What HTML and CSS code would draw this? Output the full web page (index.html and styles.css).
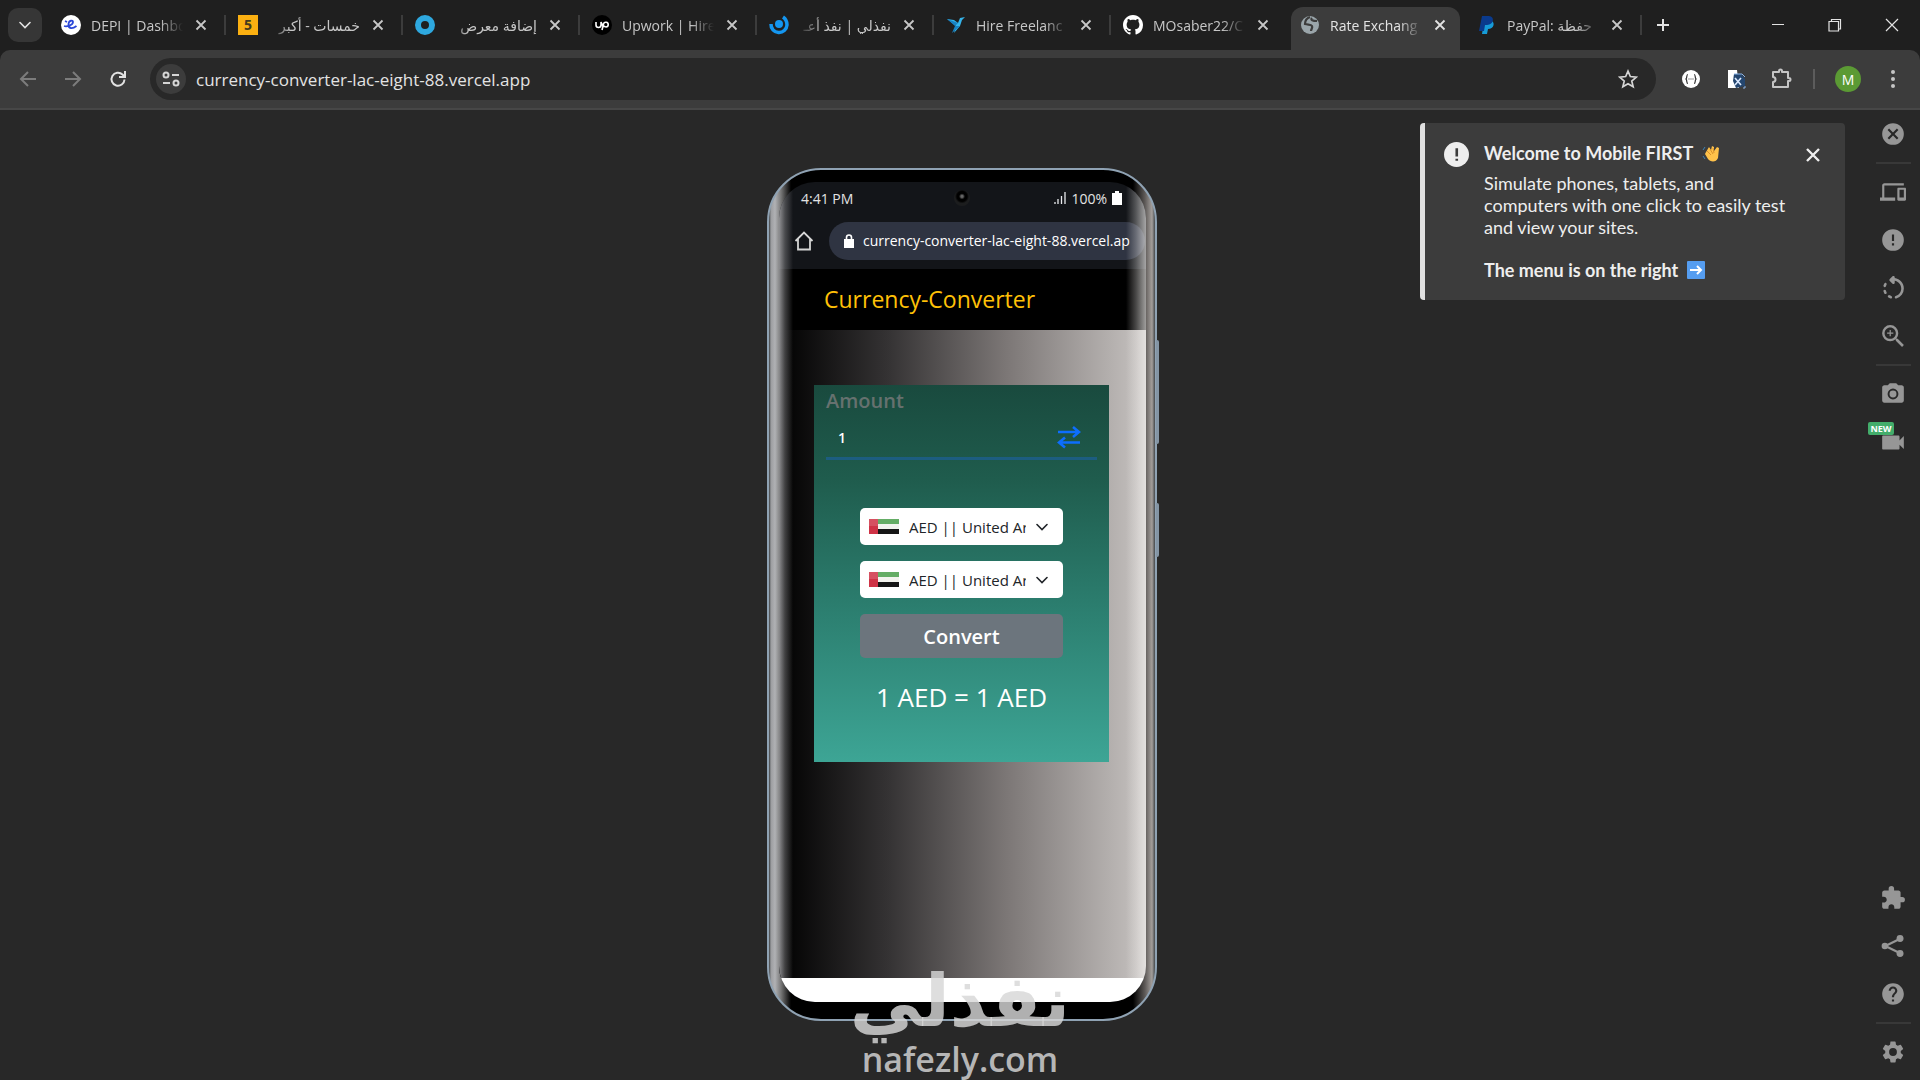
FILE: index.html
```html
<!DOCTYPE html>
<html lang="en">
<head>
<meta charset="utf-8">
<title>Rate Exchange</title>
<link rel="stylesheet" href="styles.css">
</head>
<body>
<svg class="defs" aria-hidden="true">
  <symbol id="x" viewBox="0 0 12 12"><path d="M1.500 1.500l9 9M10.500 1.500l-9 9" stroke="currentColor" stroke-width="1.800" fill="none"/></symbol>
  <symbol id="flag" viewBox="0 0 30 15"><path fill="#fff" d="M0 0h30v15H0z"/><path fill="#4a9f4c" d="M9 0h21v5H9z"/><path fill="#f3f3ee" d="M9 5h21v5H9z"/><path fill="#161616" d="M9 10h21v5H9z"/><path fill="#cf3346" d="M0 0h9v15H0z"/><path fill="#fff" opacity=".15" d="M0 0h30v7H0z"/></symbol>
  <symbol id="chev" viewBox="0 0 12 8"><path d="M1 1.500l5 5 5-5" stroke="currentColor" stroke-width="1.600" fill="none" stroke-linecap="round"/></symbol>
</svg>
<header class="browser">
  <nav class="tabs">
    <button class="tab-search" aria-label="Search tabs"><svg width="12" height="8"><use href="#chev"/></svg></button>
    <div class="tab"><svg class="fav" viewBox="0 0 20 20"><circle cx="10" cy="10" r="10" fill="#fff"/><path d="M3 11c3 1 9-1 9-4 0-2-4-2-4.500 2-.5 5 4 5 8 2M4 6l2 1" fill="none" stroke="#2c48d8" stroke-width="1.800"/></svg><span class="name">DEPI | Dashbo</span><button class="close" aria-label="Close tab"><svg><use href="#x"/></svg></button></div>
    <div class="tab"><svg class="fav" viewBox="0 0 20 20"><path fill="#fbb011" d="M0 0h20v20H0z"/><text x="10" y="15" class="five">5</text></svg><span class="name rtl" dir="rtl">خمسات - أكبر</span><button class="close" aria-label="Close tab"><svg><use href="#x"/></svg></button></div>
    <div class="tab"><svg class="fav" viewBox="0 0 20 20"><circle cx="10" cy="10" r="7" fill="none" stroke="#2ea8df" stroke-width="6"/></svg><span class="name rtl" dir="rtl">إضافة معرض</span><button class="close" aria-label="Close tab"><svg><use href="#x"/></svg></button></div>
    <div class="tab"><svg class="fav" viewBox="0 0 20 20"><circle cx="10" cy="10" r="10" fill="#000"/><path d="M4 7v3a2.500 2.500 0 0 0 5 0V7c1 4 2 4 3 5M10 15l1.500-6a2.400 2.400 0 1 1 2.500 3c-1.500 0-3-1.500-4-3" fill="none" stroke="#fff" stroke-width="1.600"/></svg><span class="name">Upwork | Hire</span><button class="close" aria-label="Close tab"><svg><use href="#x"/></svg></button></div>
    <div class="tab"><svg class="fav" viewBox="0 0 20 20"><circle cx="10" cy="9" r="4" fill="#1496f0"/><path d="M2 9a8 8 0 0 0 16 1c0-4-1-6-4-8" fill="none" stroke="#1496f0" stroke-width="3.500"/></svg><span class="name rtl" dir="rtl">نفذلي | نفذ أعـ</span><button class="close" aria-label="Close tab"><svg><use href="#x"/></svg></button></div>
    <div class="tab"><svg class="fav" viewBox="0 0 20 20"><path d="M1 4l7 1 4 3 2-5 5-1-3 3-2 6-6 7 2-7z" fill="#35b4ea"/><path d="M1 4l8 7 3-3zM6 18l3-7 5 0z" fill="#1782c4"/></svg><span class="name">Hire Freelanc</span><button class="close" aria-label="Close tab"><svg><use href="#x"/></svg></button></div>
    <div class="tab before"><svg class="fav" viewBox="0 0 16 16"><path fill="#fff" d="M8 0C3.580 0 0 3.580 0 8c0 3.540 2.290 6.530 5.470 7.590.4.070.55-.17.55-.38 0-.19-.01-.82-.01-1.490-2.010.37-2.530-.49-2.690-.94-.09-.23-.48-.94-.82-1.130-.28-.15-.68-.52-.01-.53.63-.01 1.080.58 1.230.82.72 1.210 1.870.87 2.330.66.07-.52.28-.87.51-1.070-1.780-.2-3.640-.89-3.640-3.950 0-.87.31-1.590.82-2.150-.08-.2-.36-1.020.08-2.120 0 0 .67-.21 2.200.82.64-.18 1.320-.27 2-.27s1.360.09 2 .27c1.530-1.040 2.200-.82 2.200-.82.44 1.100.16 1.920.08 2.120.51.56.82 1.270.82 2.150 0 3.070-1.870 3.750-3.650 3.950.29.25.54.73.54 1.480 0 1.070-.01 1.930-.01 2.200 0 .21.15.46.55.38A8.010 8.010 0 0 0 16 8c0-4.420-3.580-8-8-8z"/></svg><span class="name">MOsaber22/C</span><button class="close" aria-label="Close tab"><svg><use href="#x"/></svg></button></div>
    <div class="tab active"><svg class="fav" viewBox="0 0 20 20"><circle cx="10" cy="10" r="9" fill="#9aa5aa"/><path d="M10 2C7 3 5 6 5 9c3 1 6 0 7 2s-1 3-1 5M12 3c-2 2 1 3 5 3" fill="none" stroke="#3c3c3c" stroke-width="2.200"/></svg><span class="name">Rate Exchang</span><button class="close" aria-label="Close tab"><svg><use href="#x"/></svg></button></div>
    <div class="tab"><svg class="fav" viewBox="0 0 20 20"><path fill="#169bd7" d="M7 6h8c3 2 2 8-4 8l-1 5H5z"/><path fill="#0a3a8c" d="M5 1h7c6 0 5 9-2 9H8l-1 6H2z"/></svg><span class="name">PayPal: حفظة</span><button class="close" aria-label="Close tab"><svg><use href="#x"/></svg></button></div>
    <button class="plus" aria-label="New tab"><svg width="14" height="14" viewBox="0 0 14 14"><path d="M7 1v12M1 7h12" stroke="currentColor" stroke-width="2"/></svg></button>
    <div class="window-controls">
      <button aria-label="Minimize"><svg width="14" height="14" viewBox="0 0 14 14"><path d="M1 6.500h12" stroke="currentColor"/></svg></button>
      <button aria-label="Restore"><svg width="14" height="14" viewBox="0 0 14 14"><path d="M1 3.500h9.500V13H1zM3.500 3.500v-2h9V11h-2" fill="none" stroke="currentColor" stroke-width="1.200"/></svg></button>
      <button aria-label="Close window"><svg width="14" height="14" viewBox="0 0 14 14"><path d="M1 1l12 12M13 1L1 13" stroke="currentColor" stroke-width="1.200"/></svg></button>
    </div>
  </nav>
  <div class="toolbar">
    <button class="nav dim" aria-label="Back"><svg viewBox="0 0 18 18"><path d="M17 9H2M9 2L2 9l7 7" /></svg></button>
    <button class="nav dim" aria-label="Forward"><svg viewBox="0 0 18 18"><path d="M1 9h15M9 2l7 7-7 7"/></svg></button>
    <button class="nav" aria-label="Reload"><svg viewBox="0 0 18 18"><path d="M15.500 9.500A6.500 6.500 0 1 1 13.500 4.500L16 7M16 1v6h-6"/></svg></button>
    <div class="omnibox">
      <button class="site" aria-label="Site information"><svg width="18" height="18" viewBox="0 0 18 18"><path d="M10 5h7M1 13h7" /><circle cx="4" cy="5" r="2.500"/><circle cx="14" cy="13" r="2.500"/></svg></button>
      <input type="text" aria-label="Address" value="currency-converter-lac-eight-88.vercel.app">
      <button class="star" aria-label="Bookmark"><svg width="20" height="20" viewBox="0 0 24 24"><path d="M12 2.500l2.800 6.600 7.200.6-5.500 4.700 1.700 7-6.200-3.800-6.200 3.800 1.700-7L2 9.700l7.200-.6z"/></svg></button>
    </div>
    <div class="extensions">
      <button aria-label="Extension"><svg width="20" height="20" viewBox="0 0 20 20"><circle cx="10" cy="10" r="9" fill="#fff"/><path d="M7 5.500c-2 0-.5 3-2 4.500 1.500 1.500 0 4.500 2 4.500M13 5.500c2 0 .5 3 2 4.500-1.500 1.500 0 4.500-2 4.500M7.500 10h1M9.500 10h1M11.500 10h1" fill="none" stroke="#333" stroke-width="1.200"/></svg></button>
      <button aria-label="Translate extension"><svg width="20" height="20" viewBox="0 0 20 20"><path fill="#fff" d="M2 1h9l2 18H2z"/><path fill="#24466f" d="M8 5h7l4 5v7l-9 2-3-7z"/><path d="M9 9l6 7M15 9l-6 7" stroke="#dceaff" stroke-width="1.600"/><path d="M8 5h8l3 3M17 19h2v-2" stroke="#8ab4e8" fill="none"/></svg></button>
      <button aria-label="Extensions"><svg width="22" height="22" viewBox="0 0 22 22"><path d="M3 4h6V3a1.500 1.500 0 0 1 3 0v1h6v6h1a1.500 1.500 0 0 1 0 3h-1v6H3v-5a2.500 2.500 0 0 0 0-5z" fill="none" stroke="#c5c5c5" stroke-width="2" stroke-linejoin="round"/></svg></button>
      <i class="rule"></i>
      <button class="avatar" aria-label="Profile">M</button>
      <button aria-label="Menu"><svg width="20" height="20" viewBox="0 0 20 20" fill="#c5c5c5"><circle cx="10" cy="3" r="2"/><circle cx="10" cy="10" r="2"/><circle cx="10" cy="17" r="2"/></svg></button>
    </div>
  </div>
</header>

<main class="stage">
  <div class="device">
    <i class="key power"></i><i class="key volume"></i>
    <div class="screen">
      <div class="status"><span>4:41 PM</span><i class="camera"></i><span class="signal"><svg width="12" height="12" viewBox="0 0 12 12"><path d="M1 12v-2M4 12V7M7.500 12V4M11 12V0" stroke="#e8eaed" stroke-width="1.300"/></svg>100%<svg width="10" height="14" viewBox="0 0 10 14"><path fill="#fff" d="M3 0h4v2h3v12H0V2h3z"/></svg></span></div>
      <div class="address"><svg width="20" height="20" viewBox="0 0 20 20"><path d="M1.500 10L10 1.500l8.500 8.500M4 8v10.500h12V8" fill="none" stroke="#d5d5d5" stroke-width="1.800"/></svg>
        <div class="pill"><svg width="10" height="14" viewBox="0 0 10 14"><path fill="#fff" d="M0 5h10v9H0z"/><path d="M2.500 6V3.500a2.500 2.500 0 0 1 5 0V6" fill="none" stroke="#fff" stroke-width="1.600"/></svg><span>currency-converter-lac-eight-88.vercel.ap</span></div></div>
      <div class="brand">Currency-Converter</div>
      <div class="page">
        <form class="card">
          <label class="label" for="amount">Amount</label>
          <div class="amount"><input id="amount" type="text" value="1"><button type="button" aria-label="Swap currencies"><svg width="24" height="24" viewBox="0 0 24 24"><path d="M1 7h21M16 2l6 5-6 5M23 17.500H2M8 12.500l-6 5 6 5" fill="none" stroke="#0d6efd" stroke-width="2.600"/></svg></button></div>
          <div class="choices">
            <div class="choice"><svg width="30" height="15"><use href="#flag"/></svg><select aria-label="From currency"><option>AED || United Arab Emirates Dirham</option></select><svg width="12" height="8"><use href="#chev"/></svg></div>
            <div class="choice"><svg width="30" height="15"><use href="#flag"/></svg><select aria-label="To currency"><option>AED || United Arab Emirates Dirham</option></select><svg width="12" height="8"><use href="#chev"/></svg></div>
            <button type="button" class="convert">Convert</button>
          </div>
          <output class="result">1 AED = 1 AED</output>
        </form>
      </div>
      <div class="homebar"></div>
    </div>
  </div>

  <aside class="tools">
    <button aria-label="Exit"><svg viewBox="0 0 24 24"><path d="M12 2a10 10 0 1 0 0 20 10 10 0 0 0 0-20zm5 13.600L15.600 17 12 13.400 8.400 17 7 15.600l3.600-3.600L7 8.400 8.400 7l3.600 3.600L15.600 7 17 8.400 13.400 12z"/></svg></button>
    <hr>
    <button aria-label="Devices"><svg viewBox="0 0 24 24"><path d="M4 6h18V4H4c-1.100 0-2 .9-2 2v11H0v3h14v-3H4V6zm19 2h-6c-.55 0-1 .45-1 1v10c0 .55.450 1 1 1h6c.55 0 1-.45 1-1V9c0-.55-.45-1-1-1zm-1 9h-4v-7h4v7z"/></svg></button>
    <button aria-label="Information"><svg viewBox="0 0 24 24"><path d="M12 2a10 10 0 1 0 0 20 10 10 0 0 0 0-20zm1 15h-2v-2h2v2zm0-4h-2V7h2v6z"/></svg></button>
    <button aria-label="Rotate"><svg viewBox="0 0 24 24"><path d="M6.560 7.980C6.100 7.520 5.310 7.600 5 8.170c-.28.51-.5 1.030-.67 1.580-.19.630.31 1.250.96 1.250h.01c.43 0 .82-.28.94-.7.12-.4.28-.79.48-1.170.22-.37.15-.84-.16-1.150zM5.310 13h-.02c-.65 0-1.150.62-.96 1.250.16.540.38 1.070.66 1.580.31.570 1.110.66 1.570.2.300-.31.380-.77.170-1.150-.2-.37-.36-.76-.48-1.160a.97.97 0 0 0-.94-.72zm2.850 6.020c.51.28 1.040.5 1.590.66.620.180 1.240-.32 1.240-.96v-.03c0-.43-.28-.82-.7-.94-.4-.12-.78-.28-1.150-.48a.97.97 0 0 0-1.160.17l-.03.030c-.45.45-.36 1.240.21 1.550zM13 4.070v-.66c0-.89-1.080-1.340-1.710-.71L9.170 4.830c-.4.4-.4 1.040 0 1.430l2.130 2.080c.63.620 1.700.17 1.700-.72V6.090c2.840.48 5 2.940 5 5.910 0 2.730-1.820 5.020-4.320 5.750a.97.97 0 0 0-.68.94v.02c0 .65.61 1.140 1.230.96A7.976 7.976 0 0 0 20 12c0-4.080-3.050-7.440-7-7.930z" transform="translate(-2 -2) scale(1.200)"/></svg></button>
    <button aria-label="Zoom in"><svg viewBox="0 0 24 24"><path d="M15.500 14h-.79l-.28-.27A6.471 6.471 0 0 0 16 9.500 6.500 6.500 0 1 0 9.500 16c1.610 0 3.090-.59 4.230-1.570l.27.280v.79l5 4.990L20.490 19l-4.990-5zm-6 0C7.010 14 5 11.990 5 9.500S7.010 5 9.500 5 14 7.010 14 9.500 11.990 14 9.500 14zm2.500-4h-2v2H9v-2H7V9h2V7h1v2h2v1z" transform="translate(-1.500 -1.500) scale(1.150)"/></svg></button>
    <hr>
    <button aria-label="Screenshot"><svg viewBox="0 0 24 24"><circle cx="12" cy="12" r="3.200"/><path d="M9 2L7.170 4H4c-1.100 0-2 .9-2 2v12c0 1.100.9 2 2 2h16c1.100 0 2-.9 2-2V6c0-1.100-.9-2-2-2h-3.170L15 2H9zm3 15a5 5 0 1 1 0-10 5 5 0 0 1 0 10z"/></svg></button>
    <button class="video" aria-label="Record video"><svg viewBox="0 0 24 24"><path d="M18 10.500V7c0-.55-.45-1-1-1H3c-.55 0-1 .45-1 1v11c0 .55.450 1 1 1h14c.55 0 1-.45 1-1v-3.500l4 4v-12z"/></svg><span class="new">NEW</span></button>
    <span class="grow"></span>
    <button aria-label="Extensions"><svg viewBox="0 0 24 24"><path d="M20.500 11H19V7c0-1.100-.9-2-2-2h-4V3.500a2.500 2.500 0 0 0-5 0V5H4c-1.100 0-1.990.9-1.990 2v3.800H3.500c1.490 0 2.700 1.210 2.700 2.700s-1.210 2.700-2.700 2.700H2V20c0 1.100.9 2 2 2h3.800v-1.500c0-1.490 1.210-2.700 2.700-2.700s2.700 1.210 2.700 2.700V22H17c1.100 0 2-.9 2-2v-4h1.500a2.500 2.500 0 0 0 0-5z"/></svg></button>
    <button aria-label="Share"><svg viewBox="0 0 24 24"><path d="M5 12L19 5M5 12l14 7" stroke="currentColor" stroke-width="2"/><circle cx="4.500" cy="12" r="3"/><circle cx="18.500" cy="5" r="3.200"/><circle cx="18.500" cy="19" r="3.200"/></svg></button>
    <button aria-label="Help"><svg viewBox="0 0 24 24"><path d="M12 2C6.480 2 2 6.480 2 12s4.480 10 10 10 10-4.480 10-10S17.520 2 12 2zm1 17h-2v-2h2v2zm2.070-7.750l-.9.920C13.450 12.900 13 13.500 13 15h-2v-.5c0-1.100.45-2.100 1.170-2.830l1.240-1.260c.37-.36.59-.86.59-1.410 0-1.100-.9-2-2-2s-2 .9-2 2H8c0-2.210 1.790-4 4-4s4 1.790 4 4c0 .88-.36 1.680-.93 2.250z"/></svg></button>
    <hr>
    <button aria-label="Settings"><svg viewBox="0 0 24 24"><path d="M19.140 12.940c.04-.3.060-.61.060-.94s-.02-.64-.07-.94l2.030-1.580a.49.49 0 0 0 .12-.61l-1.920-3.320a.488.488 0 0 0-.59-.22l-2.390.96c-.5-.38-1.030-.7-1.620-.94l-.36-2.540a.484.484 0 0 0-.48-.41h-3.840c-.24 0-.43.17-.47.41l-.36 2.540c-.59.240-1.130.57-1.620.94l-2.390-.96a.48.48 0 0 0-.59.22L2.740 8.870c-.12.210-.08.470.12.610l2.030 1.580c-.05.3-.09.63-.09.94s.02.640.07.940l-2.030 1.580a.49.49 0 0 0-.12.610l1.920 3.320c.12.220.37.290.59.220l2.390-.96c.5.380 1.030.7 1.620.94l.36 2.540c.05.240.24.410.48.410h3.840c.24 0 .44-.17.47-.41l.36-2.540c.59-.24 1.130-.56 1.620-.94l2.390.96c.22.080.47 0 .59-.22l1.920-3.320a.49.49 0 0 0-.12-.61l-2.010-1.580zM12 15.600a3.600 3.600 0 1 1 0-7.200 3.600 3.600 0 0 1 0 7.200z"/></svg></button>
  </aside>

  <section class="toast">
    <svg class="alert" viewBox="0 0 24 24"><circle cx="12" cy="12" r="12" fill="#eee"/><path fill="#3c3c3c" d="M11 6h2.500v8H11zM11 16h2.500v2H11z"/></svg>
    <div class="message">
      <h2>Welcome to Mobile FIRST <svg width="18" height="18" viewBox="0 0 18 18"><path d="M4 8L7 3l2 3 1-4 2 1v4l3-4 2 1-1 10c-2 5-8 4-10 1L3 10z" fill="#ffc24a"/><path d="M5 7l4 4M8 5l3 5M11 4l1 5" stroke="#d9912c" fill="none"/><path d="M1 6l2-3M1 12l2 3" stroke="#3d83b8" fill="none"/></svg></h2>
      <p>Simulate phones, tablets, and computers with one click to easily test and view your sites.</p>
      <h2>The menu is on the right <svg width="18" height="18" viewBox="0 0 18 18"><rect width="18" height="18" rx="1" fill="#559df0"/><path d="M3 9h10M10 5l4 4-4 4" stroke="#fff" stroke-width="2" fill="none"/></svg></h2>
    </div>
    <button class="dismiss" aria-label="Dismiss"><svg width="16" height="16"><use href="#x"/></svg></button>
  </section>

  <div class="watermark"><span lang="ar" dir="rtl">نفذلي</span><span class="latin">nafezly.com</span></div>
</main>
</body>
</html>
```
FILE: styles.css
```css
* { box-sizing: border-box; }
body {
  margin: 0;
  min-height: 100vh;
  display: flex;
  flex-direction: column;
  background: #282828;
  color: #e3e3e3;
  font-family: "Open Sans", "Noto Sans", "DejaVu Sans", sans-serif;
  font-size: 14px;
  overflow: hidden;
}
button { border: 0; padding: 0; background: none; color: inherit; font: inherit; display: flex; align-items: center; justify-content: center; }
input, select { border: 0; padding: 0; background: none; color: inherit; font: inherit; min-width: 0; outline: none; }
svg { flex: none; }
.defs { position: absolute; width: 0; height: 0; }

/* Browser window */
.browser { background: #1f1f1f; border-bottom: 2px solid #474747; }
.tabs { display: flex; height: 50px; align-items: center; }
.tab-search { width: 34px; height: 34px; margin: 0 6px 0 8px; border-radius: 10px; background: #363636; }
.tab { position: relative; width: 177px; height: 50px; padding: 0 16px 0 13px; display: flex; align-items: center; gap: 10px; color: #c7c7c7; }
.tab::after { content: ""; position: absolute; right: -1px; width: 2px; height: 20px; background: #3c3c3c; }
.tab.active::after, .tab.before::after { display: none; }
.tab.active { color: #e3e3e3; isolation: isolate; }
.tab.active::before { content: ""; position: absolute; z-index: -1; inset: 7px 4px 0; border-radius: 12px 12px 0 0; background: #3c3c3c; }
.fav { width: 20px; height: 20px; }
.five { font: bold 14px "Open Sans", sans-serif; text-anchor: middle; fill: #433a1e; }
.name { flex: 1; white-space: nowrap; overflow: hidden; mask-image: linear-gradient(to right, #000 75%, transparent); }
.name.rtl { mask-image: linear-gradient(to left, #000 75%, transparent); }
.close { width: 16px; height: 16px; }
.close svg { width: 12px; height: 12px; }
.plus { width: 44px; height: 42px; }
.window-controls { margin-left: auto; display: flex; }
.window-controls button { width: 57px; height: 50px; }
.toolbar { height: 58px; padding: 0 5px; display: flex; align-items: center; background: #3c3c3c; border-radius: 10px 10px 0 0; }
.nav { width: 45px; height: 42px; }
.nav svg { width: 18px; height: 18px; fill: none; stroke: currentColor; stroke-width: 2; }
.dim { color: #7c7c7c; }
.omnibox { flex: 1; height: 42px; margin-left: 10px; padding: 0 18px 0 6px; display: flex; align-items: center; gap: 10px; border-radius: 21px; background: #282828; font-size: 17px; }
.omnibox input { flex: 1; }
.site { width: 30px; height: 30px; border-radius: 50%; background: #3c3c3c; }
.site svg, .star svg { fill: none; stroke: #d5d5d5; stroke-width: 2; }
.extensions { display: flex; align-items: center; margin-left: 12px; }
.extensions button { width: 45px; height: 42px; }
.rule { width: 2px; height: 20px; margin: 0 10px; background: #5c5c5c; }
.extensions .avatar { width: 26px; height: 26px; margin: 0 9px 0 10px; border-radius: 50%; background: #5b9a34; color: #fff; }

/* Workspace */
.stage { position: relative; flex: 1; display: grid; grid-template-columns: 58px 1fr 54px; }
.device {
  grid-column: 2;
  position: relative;
  justify-self: center;
  align-self: start;
  width: 390px;
  margin-top: 58px;
  padding: 12px 9px 17px 10px;
  border: 2px solid #8fa2b3;
  border-radius: 54px;
  background: linear-gradient(to right, #3d4144, #9c9da0 2px, #b0b1b4 6px, #777 12px, #000 22px, #000 calc(100% - 22px), #5e5a58 calc(100% - 10px), #a39e9b calc(100% - 3px), #44484b);
}
.key { position: absolute; right: -4px; width: 3px; background: #8495a5; border-radius: 0 2px 2px 0; }
.power { top: 170px; height: 104px; }
.volume { top: 333px; height: 54px; }
.screen { position: relative; overflow: hidden; border-radius: 36px; background: #131519; }
.screen::after {
  content: "";
  position: absolute;
  inset: 0 0 24px;
  background: linear-gradient(to right, rgba(165,165,168,.85), rgba(140,140,142,.45) 6px, transparent 14px, transparent calc(100% - 20px), rgba(240,238,236,.3) calc(100% - 10px), rgba(245,243,241,.65));
  pointer-events: none;
}
.status { display: flex; align-items: center; justify-content: space-between; height: 32px; padding: 0 24px 0 22px; }
.camera { width: 16px; height: 16px; margin-left: 16px; border-radius: 50%; background: radial-gradient(circle at 50% 40%, #666 0 1px, #000 3px 5px, #1c1d1e 7px); }
.signal { display: flex; align-items: center; gap: 5px; }
.address { display: flex; align-items: center; gap: 15px; height: 55px; padding: 0 0 2px 15px; overflow: hidden; }
.pill { display: flex; align-items: center; flex: none; gap: 9px; height: 38px; padding: 0 15px; border-radius: 19px; background: #2f3442; color: #fff; white-space: nowrap; }
.brand { height: 61px; padding-left: 45px; background: #000; color: #ffc107; font-size: 23px; font-weight: 500; line-height: 60px; }
.page { height: 648px; padding: 55px 37px 0 35px; background: linear-gradient(to right, #000, #353334 30%, #7c7776 62%, #c3bfbd 98%); }
.card { display: flex; flex-direction: column; height: 377px; padding: 0 12px; background: linear-gradient(#194a3e, #1f5c4d 25%, #2c7f70 60%, #3da595); }
.label { height: 32px; color: #66716f; font-size: 20px; font-weight: 600; line-height: 32px; }
.amount { display: flex; align-items: center; height: 43px; padding: 0 16px 0 12px; border-bottom: 3px solid #1c5d80; color: #fff; font-weight: 600; }
.amount input { flex: 1; }
.choices { display: flex; flex-direction: column; gap: 16px; padding: 48px 34px 0; }
.choice { display: flex; align-items: center; gap: 10px; height: 37px; padding: 0 15px 0 9px; border-radius: 5px; background: #fff; color: #212529; }
.choice select { flex: 1; appearance: none; overflow: hidden; text-overflow: clip; font-size: 15px; }
.convert { height: 44px; border-radius: 5px; background: #6c757d; color: #fff; font-size: 20px; font-weight: 600; }
.result { padding-top: 20px; color: #fff; font-size: 26px; font-weight: 500; line-height: 38px; text-align: center; white-space: nowrap; }
.homebar { height: 24px; background: #fff; }

/* Simulator menu */
.tools { grid-column: 3; grid-row: 1; display: flex; flex-direction: column; align-items: center; padding-bottom: 4px; color: #969696; }
.tools button { position: relative; flex: none; width: 48px; height: 48px; }
.tools button svg { width: 26px; height: 26px; fill: currentColor; }
.tools hr { width: 35px; height: 2px; margin: 4px 0; border: 0; background: #383838; }
.grow { flex: 1; }
.new { position: absolute; left: -1px; top: 4px; width: 26px; border-radius: 2px; background: #43ad6b; color: #fff; font-size: 9px; font-weight: 700; line-height: 13px; text-align: center; }

/* Welcome message */
.toast { position: absolute; top: 13px; right: 75px; display: flex; gap: 15px; width: 425px; height: 177px; padding: 17px 23px 0 19px; border-left: 5px solid #e0e0e0; border-radius: 4px; background: #3c3c3c; color: #eee; font-family: Lato, sans-serif; font-size: 18px; line-height: 22px; }
.alert { width: 25px; height: 25px; margin-top: 2px; }
.message { flex: 1; }
.message h2 { display: flex; align-items: center; gap: 9px; margin: 0; font-size: 18px; line-height: 26px; }
.message p { margin: 6px 0 19px; }
.dismiss { width: 18px; height: 30px; }

.watermark { position: absolute; left: 0; right: 0; bottom: 0; display: flex; flex-direction: column; align-items: center; color: rgba(215,215,215,.82); font-family: "DejaVu Sans", sans-serif; font-size: 72px; font-weight: 700; line-height: 74px; pointer-events: none; }
.latin { font-family: "Open Sans", sans-serif; font-size: 34px; font-weight: 600; line-height: 42px; }
```
